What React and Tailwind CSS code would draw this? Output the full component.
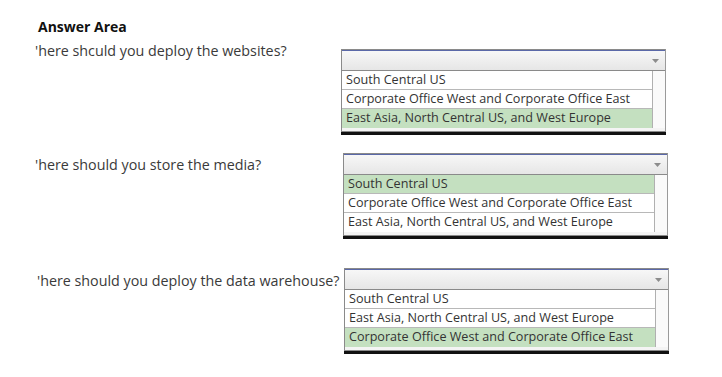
const QUESTIONS = [
  {
    label: "'here shculd you deploy the websites?",
    options: [
      'South Central US',
      'Corporate Office West and Corporate Office East',
      'East Asia, North Central US, and West Europe',
    ],
    picked: 2,
    rowClass: 'mt-[6px]',
    labelClass: 'mt-0',
    boxClass: 'mt-[7px] ml-0',
  },
  {
    label: "'here should you store the media?",
    options: [
      'South Central US',
      'Corporate Office West and Corporate Office East',
      'East Asia, North Central US, and West Europe',
    ],
    picked: 0,
    rowClass: 'mt-[18px]',
    labelClass: 'mt-[3px]',
    boxClass: 'mt-0 ml-[2px]',
  },
  {
    label: "'here should you deploy the data warehouse?",
    options: [
      'South Central US',
      'East Asia, North Central US, and West Europe',
      'Corporate Office West and Corporate Office East',
    ],
    picked: 2,
    rowClass: 'mt-[29px]',
    labelClass: 'mt-[4px] pl-[2px]',
    boxClass: 'mt-0 ml-[3px]',
  },
]

function Dropdown({ options, picked, className }) {
  return (
    <div className={`w-[325px] shrink-0 ${className}`}>
      <div className="border border-[#8a8a8a] border-r-[#9a9a9a]">
        <div className="h-[20px] border-t border-t-[#5a68a8] bg-gradient-to-b from-[#f7f7f7] to-[#e6e6e6] flex items-center justify-end pr-[6px]">
          <svg width="7" height="4" viewBox="0 0 7 4">
            <path d="M0 0 L7 0 L3.5 4 Z" fill="#8c8c8c" />
          </svg>
        </div>
        <div className="flex border-t border-[#8a8a8a]">
          <div className="w-[311px] border-r border-[#b0b0b0]">
            {options.map((opt, i) => (
              <div
                key={opt}
                className={`h-[19px] flex items-center pl-[4px] text-[12.6px] text-[#333] whitespace-nowrap ${
                  i < options.length - 1 ? 'border-b border-[#b8b8b8]' : ''
                } ${i === picked ? 'bg-[#c4e0c0]' : 'bg-white'}`}
              >
                {opt}
              </div>
            ))}
          </div>
          <div className="flex-1 bg-[#fafafa]" />
        </div>
        <div className="h-[3px] bg-[#f4f4f4]" />
      </div>
      <div className="h-[3px] bg-[#111]" />
    </div>
  )
}

export default function App() {
  return (
    <div
      className="w-[722px] h-[377px] bg-white pl-[35px] pt-[18px] text-[#333]"
      style={{ fontFamily: '"Open Sans", "Noto Sans", sans-serif' }}
    >
      <div className="pl-[3px] text-[14px] font-bold text-[#111] leading-[18px]">Answer Area</div>
      {QUESTIONS.map((q) => (
        <div key={q.label} className={`flex items-start ${q.rowClass}`}>
          <div
            className={`w-[306px] shrink-0 whitespace-nowrap text-[14.3px] leading-[18px] text-[#3a3a3a] ${q.labelClass}`}
          >
            {q.label}
          </div>
          <Dropdown options={q.options} picked={q.picked} className={q.boxClass} />
        </div>
      ))}
    </div>
  )
}
